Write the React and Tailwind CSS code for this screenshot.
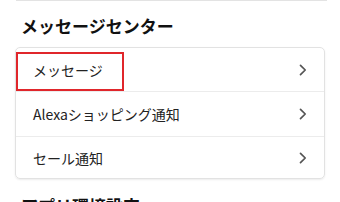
const ROWS = [
  { label: "メッセージ", h: "h-[43px]", marked: true },
  { label: "Alexaショッピング通知", h: "h-[45px]" },
  { label: "セール通知", h: "h-[42px]" },
];

function Chevron() {
  return (
    <svg width="8" height="12" viewBox="0 0 8 12" className="shrink-0">
      <path d="M1.5 1.3 L6.2 6 L1.5 10.7" fill="none" stroke="#555" strokeWidth="1.7" strokeLinecap="round" strokeLinejoin="round" />
    </svg>
  );
}

export default function App() {
  return (
    <div className="h-[202px] w-[340px] overflow-hidden bg-white font-['Noto_Sans_CJK_JP','Noto_Sans',sans-serif] text-[#111]">
      <div className="ml-[16px] mr-[13px] border-t border-[#e3e3e3]" />
      <h2 className="mt-[13px] pl-[21px] text-[17px] font-bold leading-[24px]">メッセージセンター</h2>
      <div className="mx-[15px] mt-[9px] rounded-[5px] border border-[#e2e2e2] shadow-[0_1px_2px_rgba(0,0,0,0.08)]">
        {ROWS.map((r, i) => (
          <div
            key={r.label}
            className={`relative flex items-center justify-between pl-[17px] pr-[17px] ${r.h} ${i > 0 ? "border-t border-[#ececec]" : ""}`}
          >
            <span className="text-[14px] leading-[20px] text-[#222]">{r.label}</span>
            <Chevron />
            {r.marked && (
              <div className="absolute left-0 top-[4px] h-[39px] w-[108px] border-2 border-[#e0262b]" />
            )}
          </div>
        ))}
      </div>
      <h2 className="mt-[15px] pl-[21px] text-[17px] font-bold leading-[24px]">アプリ環境設定</h2>
    </div>
  );
}
